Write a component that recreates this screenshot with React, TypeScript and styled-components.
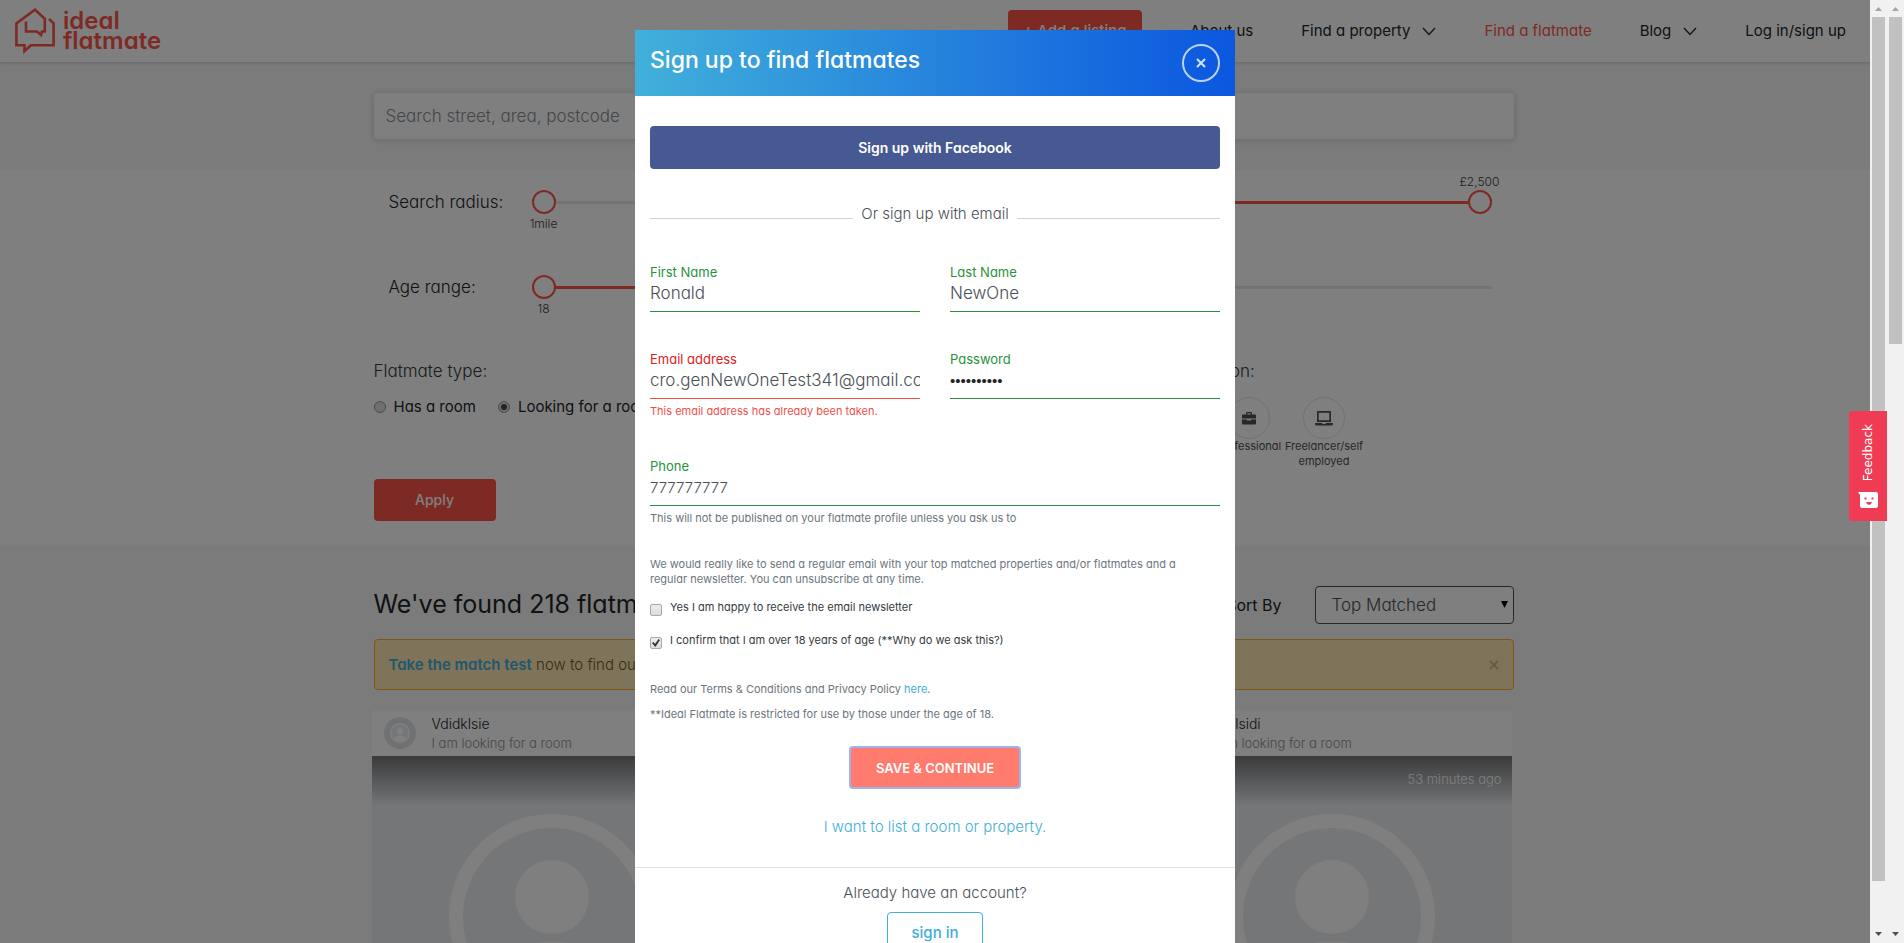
import React from "react";
import styled, { createGlobalStyle } from "styled-components";

const GlobalStyle = createGlobalStyle`
  *, *::before, *::after { box-sizing: border-box; }
  body {
    margin: 0;
    overflow: hidden;
    color: #212529;
    font: 300 17px/24px Inter, "Liberation Sans", sans-serif;
    font-feature-settings: "cv11";
  }
  button, input, select { font: inherit; font-feature-settings: inherit; color: inherit; }
  button { cursor: pointer; }
  a { color: inherit; text-decoration: none; }
  h1, h2, p { margin: 0; }
`;

const red = "#fc5548";
const blue = "#41aedb";

const Shell = styled.div`
  display: flex;
  height: 100vh;
  overflow: hidden;
`;

const Stage = styled.div`
  position: relative;
  flex: 1;
  min-width: 0;
  overflow: hidden;
`;

/* Scroll bars */

const Track = styled.div`
  display: flex;
  flex: none;
  flex-direction: column;
  justify-content: space-between;
  align-items: center;
  width: 17px;
  height: 100%;
  background: #f1f1f1;
`;

const Thumb = styled.div<{ $share: number }>`
  width: 13px;
  height: ${(p) => p.$share}%;
  background: #c1c1c1;
`;

const ThumbRail = styled.div`
  flex: 1;
`;

const Arrow = styled.svg`
  display: block;
  width: 17px;
  height: 17px;
`;

function ScrollBar({ share }: { share: number }) {
  return (
    <Track>
      <Arrow viewBox="0 0 17 17"><path d="M5 11h7L8.500 7z" fill="#a3a3a3" /></Arrow>
      <ThumbRail><Thumb $share={share} /></ThumbRail>
      <Arrow viewBox="0 0 17 17"><path d="M5 6h7L8.500 10z" fill="#505050" /></Arrow>
    </Track>
  );
}

/* Page behind the dialog */

const Header = styled.header`
  position: relative;
  display: flex;
  align-items: center;
  justify-content: space-between;
  height: 62px;
  padding: 0 41px 0 15px;
  background: #fff;
  box-shadow: 0 1px 4px rgba(0, 0, 0, 0.18);
`;

const Brand = styled.a`
  display: flex;
  align-items: center;
  gap: 8px;
  color: ${red};
  font-size: 24px;
  font-weight: 600;
  line-height: 20px;
`;

const BrandName = styled.span`
  display: block;
  width: min-content;
`;

const Nav = styled.nav`
  display: flex;
  align-items: center;
  gap: 48px;
`;

const NavLink = styled.a<{ $active?: boolean }>`
  display: flex;
  align-items: center;
  gap: 12px;
  color: ${(p) => (p.$active ? red : "#212529")};
  font-size: 15px;
  font-weight: 400;
`;

const PrimaryButton = styled.button`
  width: 134px;
  height: 42px;
  padding: 0;
  border: 0;
  border-radius: 4px;
  background: ${red};
  color: #fff;
  font-size: 15px;
  font-weight: 500;
`;

const ApplyButton = styled(PrimaryButton)`
  width: 122px;
  font-size: 14px;
`;

const Container = styled.div`
  width: 100%;
  max-width: 1140px;
  margin: 0 auto;
`;

const SearchBand = styled.section`
  padding: 31px 0;
  background: #f7f7f7;
`;

const SearchInput = styled.input`
  display: block;
  width: 100%;
  height: 46px;
  padding: 0 12px;
  border: 0;
  border-radius: 4px;
  background: #fff;
  box-shadow: 0 1px 5px 2px rgba(0, 0, 0, 0.1);
  &::placeholder { color: #868e96; opacity: 1; }
`;

const Filters = styled.section`
  padding: 4px 0 25px;
  background: #fff;
`;

const TwoColumns = styled.div`
  display: grid;
  grid-template-columns: 1fr 1fr;
`;

const RangeRow = styled.div`
  display: grid;
  grid-template-columns: 143px 1fr;
  align-items: center;
  height: 60px;
  margin-bottom: 25px;
  padding: 0 22px 0 15px;
`;

const RangeLabel = styled.label`
  padding-bottom: 5px;
`;

const RangeCell = styled.div`
  display: grid;
  grid-column: 2;
  grid-template-rows: 16px 24px 20px;
`;

const RangeValue = styled.output<{ $end?: boolean }>`
  display: flex;
  justify-content: center;
  justify-self: ${(p) => (p.$end ? "end" : "start")};
  width: 24px;
  color: #343a40;
  font-size: 12px;
  line-height: ${(p) => (p.$end ? "16px" : "20px")};
  white-space: nowrap;
`;

const Range = styled.input<{ $track: string }>`
  appearance: none;
  width: 100%;
  height: 24px;
  margin: 0;
  background: linear-gradient(${(p) => p.$track}, ${(p) => p.$track}) center / 100% 3px no-repeat;
  &::-webkit-slider-thumb {
    appearance: none;
    width: 24px;
    height: 24px;
    border: 2px solid ${red};
    border-radius: 50%;
    background: #fff;
  }
`;

const FilterGroup = styled.fieldset`
  min-width: 0;
  margin: 15px 0 0;
  padding: 0;
  border: 0;
`;

const GroupTitle = styled.legend`
  padding: 0;
  color: #343a40;
`;

const OccupationTitle = styled(GroupTitle)`
  padding-left: 215px;
`;

const RadioRow = styled.div`
  display: flex;
  gap: 22px;
  height: 48px;
  margin: 12px 0 36px;
`;

const RadioLabel = styled.label`
  display: flex;
  gap: 8px;
  height: 24px;
  align-items: center;
  font-size: 15px;
  font-weight: 400;
`;

const Radio = styled.input`
  appearance: none;
  display: grid;
  place-items: center;
  width: 12px;
  height: 12px;
  margin: 0;
  border: 1px solid #999;
  border-radius: 50%;
  background: #dedede;
  &:checked::before {
    content: "";
    width: 6px;
    height: 6px;
    border-radius: 50%;
    background: #444;
  }
`;

const Jobs = styled.div`
  display: grid;
  grid-template-columns: repeat(3, 75px);
  margin-top: 14px;
  padding-left: 193px;
`;

const Job = styled.button`
  display: flex;
  flex-direction: column;
  align-items: center;
  padding: 0;
  border: 0;
  background: none;
  color: #495057;
  font-size: 11px;
  font-weight: 400;
  line-height: 15px;
`;

const JobIcon = styled.span`
  display: grid;
  place-items: center;
  width: 42px;
  height: 42px;
  border: 1px solid #dee2e6;
  border-radius: 50%;
  background: #fff;
`;

const Results = styled.section`
  min-height: 600px;
  padding: 40px 0;
  background: #f7f7f7;
`;

const ResultsBar = styled.div`
  display: flex;
  align-items: center;
  justify-content: space-between;
`;

const ResultsTitle = styled.h1`
  padding-bottom: 2px;
  font-size: 25px;
  font-weight: 400;
`;

const SortLabel = styled.label`
  display: flex;
  align-items: center;
  gap: 33px;
  font-size: 16px;
  font-weight: 400;
`;

const SelectBox = styled.span`
  position: relative;
  width: 199px;
`;

const Select = styled.select`
  display: block;
  appearance: none;
  width: 100%;
  height: 38px;
  padding: 0 16px;
  border: 1px solid #495057;
  border-radius: 4px;
  background: #fff;
  color: #495057;
  font-size: 17px;
  font-weight: 300;
`;

const SelectArrow = styled.svg`
  position: absolute;
  top: 14px;
  right: 6px;
`;

const Notice = styled.div`
  display: flex;
  align-items: center;
  justify-content: space-between;
  height: 51px;
  margin: 15px 0 20px;
  padding: 0 14px;
  border: 1px solid #ffb01f;
  border-radius: 4px;
  background: #ffe9b3;
  color: #6b5a2e;
  font-size: 15px;
`;

const NoticeLink = styled.a`
  color: ${blue};
  font-weight: 600;
`;

const NoticeClose = styled.button`
  padding: 0;
  border: 0;
  background: none;
  color: #cdb989;
  line-height: 0;
`;

const Cards = styled.div`
  display: grid;
  grid-template-columns: repeat(3, 1fr);
  gap: 30px;
  margin: 0 2px 0 -2px;
`;

const Card = styled.article`
  overflow: hidden;
  border-radius: 4px;
  background: #fff;
`;

const CardHead = styled.div`
  display: flex;
  align-items: center;
  gap: 16px;
  height: 46px;
  padding: 0 12px;
`;

const CardName = styled.h2`
  font-size: 14px;
  font-weight: 300;
  line-height: 20px;
`;

const CardNote = styled.p`
  color: #868e96;
  font-size: 13px;
  line-height: 18px;
`;

const CardPhoto = styled.div`
  position: relative;
  display: grid;
  place-items: start center;
  height: 320px;
  padding-top: 58px;
  background: linear-gradient(rgba(0, 0, 0, 0.5), rgba(0, 0, 0, 0) 50px), #e9ecef;
`;

const CardTime = styled.time`
  position: absolute;
  top: 14px;
  right: 10px;
  color: #fff;
  font-size: 13px;
  line-height: 18px;
`;

/* Dialog layer */

const Layer = styled.div`
  position: absolute;
  inset: 0;
  display: flex;
`;

const Backdrop = styled.div`
  flex: 1;
  overflow: hidden;
  padding: 30px 16px;
  background: rgba(0, 0, 0, 0.5);
`;

const Dialog = styled.div`
  width: 100%;
  max-width: 600px;
  margin: 0 auto;
  background: #fff;
  color: #495057;
`;

const DialogHead = styled.div`
  display: flex;
  align-items: center;
  justify-content: space-between;
  height: 66px;
  padding: 0 15px;
  background: linear-gradient(90deg, #41b0da, #0b57df);
  color: #fff;
`;

const DialogTitle = styled.h2`
  padding-bottom: 6px;
  font-size: 23px;
  font-weight: 500;
`;

const CloseButton = styled.button`
  display: grid;
  place-items: center;
  width: 38px;
  height: 38px;
  padding: 0;
  border: 2px solid #bcd3f7;
  border-radius: 50%;
  background: none;
  color: #d3e2fa;
`;

const DialogForm = styled.form`
  display: flex;
  flex-direction: column;
  padding: 30px 15px 28px;
`;

const FacebookButton = styled.button`
  height: 43px;
  border: 0;
  border-radius: 4px;
  background: #475993;
  color: #fff;
  font-size: 14px;
  font-weight: 600;
`;

const Or = styled.div`
  display: flex;
  align-items: center;
  gap: 8px;
  margin: 33px 0 36px;
  font-size: 15px;
  &::before, &::after {
    content: "";
    flex: 1;
    height: 1px;
    margin-top: 8px;
    background: #ced4da;
  }
`;

const FieldGrid = styled.div`
  display: grid;
  grid-template-columns: 1fr 1fr;
  gap: 37px 30px;
`;

const Field = styled.div<{ $invalid?: boolean; $wide?: boolean }>`
  --tone: ${(p) => (p.$invalid ? "#fc4a3e" : "#28923a")};
  --label: ${(p) => (p.$invalid ? "#e02020" : "#28923a")};
  grid-column: ${(p) => (p.$wide ? "1 / -1" : "auto")};
  min-width: 0;
`;

const FieldLabel = styled.label`
  display: block;
  color: var(--label);
  font-size: 13px;
  font-weight: 400;
  line-height: 20px;
`;

const TextInput = styled.input`
  display: block;
  width: 100%;
  height: 30px;
  padding: 0 0 7px;
  border: 0;
  border-bottom: 1px solid var(--tone);
  border-radius: 0;
  background: none;
  outline: 0;
  font-size: 17px;
  &[type="tel"] { font-size: 15px; }
  &[type="password"] {
    color: #212529;
    font-family: "Liberation Sans", sans-serif;
    font-size: 15px;
  }
`;

const Small = styled.p`
  color: #6c757d;
  font-size: 11px;
  font-weight: 400;
  line-height: 15px;
`;

const Hint = styled(Small)<{ $error?: boolean }>`
  margin-top: 5px;
  color: ${(p) => (p.$error ? "#ee4f4a" : "#6c757d")};
`;

const News = styled(Small)`
  margin-top: 31px;
  padding-right: 15px;
`;

const Checks = styled.div`
  display: flex;
  flex-direction: column;
  gap: 16px;
  margin: 12px 0 33px;
`;

const CheckLabel = styled.label`
  display: flex;
  gap: 8px;
  height: 17px;
  color: #343a40;
  font-size: 11px;
  font-weight: 400;
  line-height: 16px;
`;

const Checkbox = styled.input`
  appearance: none;
  display: grid;
  place-items: center;
  width: 12px;
  height: 12px;
  margin: 5px 0 0;
  border: 1px solid #a9a9a9;
  border-radius: 2px;
  background: linear-gradient(#ededed, #dcdcdc);
  &:checked::before {
    content: "";
    width: 8px;
    height: 8px;
    background: #333;
    clip-path: polygon(0 50%, 20% 38%, 38% 62%, 82% 0, 100% 12%, 42% 100%);
  }
`;

const Legal = styled.div`
  display: grid;
  gap: 10px;
`;

const TextLink = styled.a`
  color: ${blue};
`;

const SaveButton = styled.button`
  align-self: center;
  width: 170px;
  height: 41px;
  margin: 25px 0 27px;
  border: 0;
  border-radius: 3px;
  background: #ff7b6e;
  color: #fff;
  outline: 2px solid #9bb4f0;
  outline-offset: -1px;
  font-size: 13px;
  font-weight: 600;
`;

const ListLink = styled(TextLink)`
  align-self: center;
  font-size: 15px;
`;

const DialogFoot = styled.div`
  display: flex;
  flex-direction: column;
  align-items: center;
  gap: 7px;
  padding: 13px 15px 30px;
  border-top: 1px solid #dee2e6;
  font-size: 15px;
`;

const SignIn = styled.button`
  width: 96px;
  height: 42px;
  border: 1px solid ${blue};
  border-radius: 4px;
  background: #fff;
  color: ${blue};
  font-size: 15px;
  font-weight: 500;
`;

const Feedback = styled.button`
  position: absolute;
  top: 411px;
  right: 0;
  display: flex;
  flex-direction: column;
  align-items: center;
  justify-content: space-between;
  width: 38px;
  height: 110px;
  padding: 13px 0;
  border: 0;
  border-radius: 3px 0 0 3px;
  background: #ef3b53;
  color: #fff;
  font: 400 12px/16px "DejaVu Sans", sans-serif;
`;

const FeedbackText = styled.span`
  writing-mode: vertical-rl;
  transform: rotate(180deg);
`;

const Chevron = () => (
  <svg width="14" height="9" viewBox="0 0 14 9" fill="none" stroke="currentColor" strokeWidth="1.300">
    <path d="M1 1l6 6.500L13 1" />
  </svg>
);

const Cross = ({ size, width }: { size: number; width: number }) => (
  <svg width={size} height={size} viewBox="0 0 10 10" stroke="currentColor" strokeWidth={width}>
    <path d="M1 1l8 8M9 1L1 9" />
  </svg>
);

const Avatar = ({ size }: { size: number }) => (
  <svg width={size} height={size} viewBox="0 0 206 206">
    <circle cx="103" cy="103" r="96" fill="#e9ecef" stroke="#fff" strokeWidth="14" />
    <circle cx="103" cy="83" r="37" fill="#fff" />
    <path d="M40 166c6-28 26-38 63-38s57 10 63 38c-16 18-38 28-63 28s-47-10-63-28z" fill="#fff" />
  </svg>
);

const AvatarDisc = styled.span`
  display: grid;
  place-items: center;
  width: 32px;
  height: 32px;
  border-radius: 50%;
  background: #dee2e6;
`;

function Flatmate({ name, time }: { name: string; time?: string }) {
  return (
    <Card>
      <CardHead>
        <AvatarDisc><Avatar size={20} /></AvatarDisc>
        <div>
          <CardName>{name}</CardName>
          <CardNote>I am looking for a room</CardNote>
        </div>
      </CardHead>
      <CardPhoto>
        {time && <CardTime>{time}</CardTime>}
        <Avatar size={206} />
      </CardPhoto>
    </Card>
  );
}

type RangeProps = { id: string; label?: string; name?: string; value: number; min?: number; max: number; track?: string; above?: string; below?: string };

function RangeFilter({ id, label, name, value, min = 0, max, track = "#e6e6e6", above, below }: RangeProps) {
  return (
    <RangeRow>
      {label && <RangeLabel htmlFor={id}>{label}</RangeLabel>}
      <RangeCell>
        <RangeValue htmlFor={id} $end>{above}</RangeValue>
        <Range id={id} type="range" aria-label={name} min={min} max={max} defaultValue={value} $track={track} />
        <RangeValue htmlFor={id}>{below}</RangeValue>
      </RangeCell>
    </RangeRow>
  );
}

type TextFieldProps = { id: string; label: string; value: string; type?: string; wide?: boolean; error?: string; hint?: string };

function TextField({ id, label, value, type = "text", wide, error, hint }: TextFieldProps) {
  return (
    <Field $invalid={!!error} $wide={wide}>
      <FieldLabel htmlFor={id}>{label}</FieldLabel>
      <TextInput id={id} type={type} defaultValue={value} />
      {(error || hint) && <Hint $error={!!error}>{error || hint}</Hint>}
    </Field>
  );
}

export default function App() {
  return (
    <Shell>
      <GlobalStyle />
      <Stage>
        <Header>
          <Brand href="#">
            <svg width="40" height="46" viewBox="0 0 40 46" fill="none" stroke="currentColor" strokeWidth="2.600">
              <path d="M34 11l4.600 4.200v22H16L9.500 43v-5.800H1.400V15.500L20 1.800l9.800 9V23.500h-2.800l-1 3.500-4-3.500H11V13.500" />
            </svg>
            <BrandName>ideal flatmate</BrandName>
          </Brand>
          <Nav>
            <PrimaryButton>+ Add a listing</PrimaryButton>
            <NavLink href="#">About us</NavLink>
            <NavLink href="#">Find a property <Chevron /></NavLink>
            <NavLink href="#" $active>Find a flatmate</NavLink>
            <NavLink href="#">Blog <Chevron /></NavLink>
            <NavLink href="#">Log in/sign up</NavLink>
          </Nav>
        </Header>

        <SearchBand>
          <Container>
            <SearchInput aria-label="Search street, area, postcode" placeholder="Search street, area, postcode" />
          </Container>
        </SearchBand>

        <Filters>
          <Container>
            <TwoColumns>
              <RangeFilter id="radius" label="Search radius:" value={1} min={1} max={40} below="1mile" />
              <RangeFilter id="budget" name="Budget" value={2500} max={2500} track={red} above="£2,500" />
              <RangeFilter id="age" label="Age range:" value={18} min={18} max={99} track={red} below="18" />
              <RangeFilter id="stay" name="Length of stay" value={0} max={24} />
              <div>
                <FilterGroup>
                  <GroupTitle>Flatmate type:</GroupTitle>
                  <RadioRow>
                    <RadioLabel><Radio type="radio" name="type" /> Has a room</RadioLabel>
                    <RadioLabel><Radio type="radio" name="type" defaultChecked /> Looking for a room</RadioLabel>
                  </RadioRow>
                </FilterGroup>
                <ApplyButton>Apply</ApplyButton>
              </div>
              <FilterGroup>
                <OccupationTitle>Occupation:</OccupationTitle>
                <Jobs>
                  <Job><JobIcon />Student</Job>
                  <Job>
                    <JobIcon>
                      <svg width="14" height="13" viewBox="0 0 14 13" fill="currentColor">
                        <path d="M4 2.500V1q0-1 1-1h4q1 0 1 1v1.500h3q1 0 1 1V6.500H0V3.500q0-1 1-1zM5.300 2.500h3.400V1.300H5.300zM0 7.500h5v1h4v-1h5V11.500q0 1-1 1H1q-1 0-1-1z" />
                      </svg>
                    </JobIcon>
                    Professional
                  </Job>
                  <Job>
                    <JobIcon>
                      <svg width="18" height="15" viewBox="0 0 18 15" fill="currentColor" fillRule="evenodd">
                        <path d="M3 0h12q1 0 1 1v10H2V1q0-1 1-1zM3.700 1.700v7.600h10.600V1.700zM0 12h7q0 1 1 1h2q1 0 1-1h7v1q0 1.500-1.500 1.500h-15Q0 14.500 0 13z" />
                      </svg>
                    </JobIcon>
                    Freelancer/self employed
                  </Job>
                </Jobs>
              </FilterGroup>
            </TwoColumns>
          </Container>
        </Filters>

        <Results>
          <Container>
            <ResultsBar>
              <ResultsTitle>We've found 218 flatmates</ResultsTitle>
              <SortLabel>
                Sort By
                <SelectBox>
                  <Select><option>Top Matched</option></Select>
                  <SelectArrow width="7" height="8" viewBox="0 0 7 8"><path d="M0 1h7L3.500 8z" /></SelectArrow>
                </SelectBox>
              </SortLabel>
            </ResultsBar>
            <Notice>
              <span><NoticeLink href="#">Take the match test</NoticeLink> now to find out who you match with</span>
              <NoticeClose aria-label="Dismiss"><Cross size={10} width={2} /></NoticeClose>
            </Notice>
            <Cards>
              <Flatmate name="Vdidklsie" />
              <Flatmate name="Flatmate" />
              <Flatmate name="Vdillsidi" time="53 minutes ago" />
            </Cards>
          </Container>
        </Results>

        <Layer>
          <Backdrop>
            <Dialog role="dialog" aria-labelledby="dialog-title">
              <DialogHead>
                <DialogTitle id="dialog-title">Sign up to find flatmates</DialogTitle>
                <CloseButton aria-label="Close"><Cross size={10} width={2} /></CloseButton>
              </DialogHead>
              <DialogForm onSubmit={(e) => e.preventDefault()}>
                <FacebookButton type="button">Sign up with Facebook</FacebookButton>
                <Or>Or sign up with email</Or>
                <FieldGrid>
                  <TextField id="first" label="First Name" value="Ronald" />
                  <TextField id="last" label="Last Name" value="NewOne" />
                  <TextField id="email" label="Email address" value="cro.genNewOneTest341@gmail.com" error="This email address has already been taken." />
                  <TextField id="password" label="Password" type="password" value="abcdefghij" />
                  <TextField id="phone" label="Phone" type="tel" value="777777777" wide hint="This will not be published on your flatmate profile unless you ask us to" />
                </FieldGrid>
                <News>We would really like to send a regular email with your top matched properties and/or flatmates and a regular newsletter. You can unsubscribe at any time.</News>
                <Checks>
                  <CheckLabel><Checkbox type="checkbox" />Yes I am happy to receive the email newsletter</CheckLabel>
                  <CheckLabel><Checkbox type="checkbox" defaultChecked />I confirm that I am over 18 years of age (**Why do we ask this?)</CheckLabel>
                </Checks>
                <Legal>
                  <Small>Read our Terms &amp; Conditions and Privacy Policy <TextLink href="#">here</TextLink>.</Small>
                  <Small>**Ideal Flatmate is restricted for use by those under the age of 18.</Small>
                </Legal>
                <SaveButton>SAVE &amp; CONTINUE</SaveButton>
                <ListLink href="#">I want to list a room or property.</ListLink>
              </DialogForm>
              <DialogFoot>
                <span>Already have an account?</span>
                <SignIn>sign in</SignIn>
              </DialogFoot>
            </Dialog>
          </Backdrop>
          <ScrollBar share={95} />
          <Feedback>
            <FeedbackText>Feedback</FeedbackText>
            <svg width="20" height="16" viewBox="0 0 20 16">
              <path d="M0 0h18q2 0 2 2v12q0 2-2 2H4q-2 0-2-2V3z" fill="#fff" />
              <path d="M6.500 5.500h2v2h-2zM13.500 5.500h2v2h-2zM8 10h6q-1 3-3 3t-3-3z" fill="#ef3b53" />
            </svg>
          </Feedback>
        </Layer>
      </Stage>
      <ScrollBar share={36} />
    </Shell>
  );
}
